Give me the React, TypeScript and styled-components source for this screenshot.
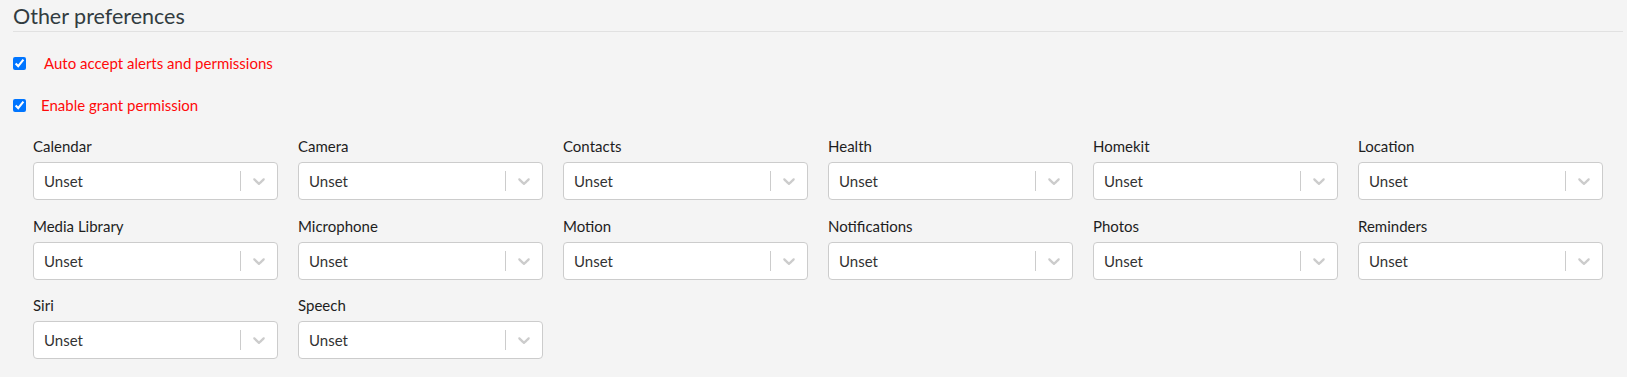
import styled, { createGlobalStyle } from 'styled-components';

const GlobalStyle = createGlobalStyle`
  body {
    margin: 0;
    background-color: #f4f4f4;
    font-family: 'Lato', 'Open Sans', sans-serif;
  }
`;

const Page = styled.div`
  padding: 0 4px 20px 13px;
`;

const Heading = styled.h3`
  margin: 3px 0 0 0;
  padding-bottom: 2px;
  font-size: 21.5px;
  line-height: 26px;
  font-weight: 400;
  color: #323c41;
  border-bottom: 1px solid #e1e1e1;
`;

const Options = styled.div`
  margin-top: 10px;
`;

const CheckRow = styled.label<{ $indent: number }>`
  display: flex;
  align-items: center;
  height: 42px;
  gap: ${(p) => p.$indent}px;
  font-size: 15px;
  line-height: 18px;
  color: #ff0a0a;
  cursor: pointer;
  input {
    margin: 0;
    width: 13px;
    height: 13px;
  }
`;

const PermissionGrid = styled.div`
  display: grid;
  grid-template-columns: repeat(6, 1fr);
  column-gap: 20px;
  row-gap: 16.5px;
  padding: 11px 20px 0 20px;
`;

const Field = styled.div`
  display: flex;
  flex-direction: column;
`;

const FieldLabel = styled.div`
  font-size: 15px;
  line-height: 18px;
  color: #1e1e1e;
  margin-bottom: 7px;
`;

const Control = styled.div`
  display: flex;
  align-items: stretch;
  box-sizing: border-box;
  height: 38px;
  background-color: #fff;
  border: 1px solid #ccc;
  border-radius: 4px;
`;

const ValueContainer = styled.div`
  flex: 1;
  display: flex;
  align-items: center;
  padding: 2px 8px;
`;

const SingleValue = styled.span`
  margin: 0 2px;
  font-size: 15px;
  line-height: 18px;
  color: #333;
`;

const Separator = styled.span`
  width: 1px;
  margin: 8px 0;
  background-color: #ccc;
`;

const Indicator = styled.div`
  display: flex;
  align-items: center;
  padding: 8px;
  color: #ccc;
  svg {
    display: block;
    fill: currentColor;
  }
`;

const permissions = [
  'Calendar',
  'Camera',
  'Contacts',
  'Health',
  'Homekit',
  'Location',
  'Media Library',
  'Microphone',
  'Motion',
  'Notifications',
  'Photos',
  'Reminders',
  'Siri',
  'Speech',
];

function Chevron() {
  return (
    <svg width='20' height='20' viewBox='0 0 20 20' aria-hidden='true'>
      <path d='M4.516 7.548c0.436-0.446 1.043-0.481 1.576 0l3.908 3.747 3.908-3.747c0.533-0.481 1.141-0.446 1.574 0 0.436 0.445 0.408 1.197 0 1.615-0.406 0.418-4.695 4.502-4.695 4.502-0.217 0.223-0.502 0.335-0.787 0.335s-0.57-0.112-0.789-0.335c0 0-4.287-4.084-4.695-4.502s-0.436-1.17 0-1.615z' />
    </svg>
  );
}

function PermissionSelect({ label }: { label: string }) {
  return (
    <Field>
      <FieldLabel>{label}</FieldLabel>
      <Control>
        <ValueContainer>
          <SingleValue>Unset</SingleValue>
        </ValueContainer>
        <Separator />
        <Indicator>
          <Chevron />
        </Indicator>
      </Control>
    </Field>
  );
}

function App() {
  return (
    <Page>
      <GlobalStyle />
      <Heading>Other preferences</Heading>
      <Options>
        <CheckRow $indent={18}>
          <input type='checkbox' defaultChecked />
          Auto accept alerts and permissions
        </CheckRow>
        <CheckRow $indent={15}>
          <input type='checkbox' defaultChecked />
          Enable grant permission
        </CheckRow>
      </Options>
      <PermissionGrid>
        {permissions.map((name) => (
          <PermissionSelect key={name} label={name} />
        ))}
      </PermissionGrid>
    </Page>
  );
}

export default App;
